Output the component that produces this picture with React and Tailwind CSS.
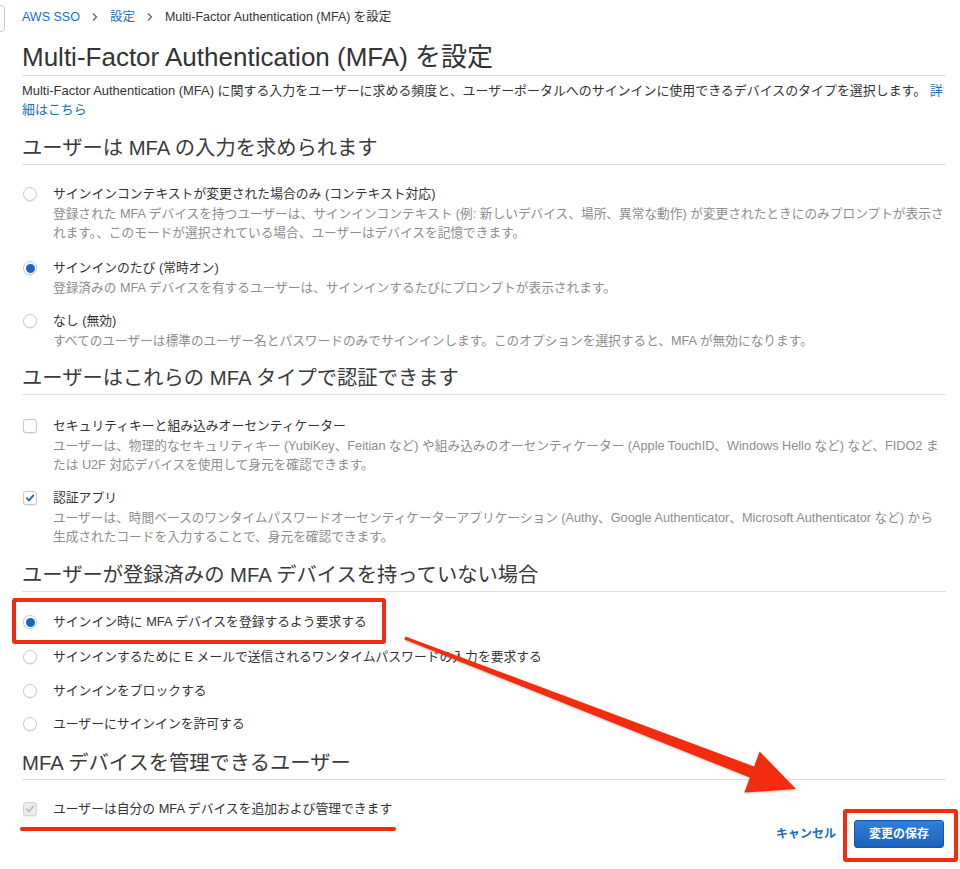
import React from "react";

function Radio({ checked }) {
  return (
    <span className="flex h-[14px] w-[14px] shrink-0 items-center justify-center rounded-full border border-[#c9c9c9] bg-white shadow-[0_1px_1px_rgba(0,0,0,0.08)]">
      {checked && <span className="h-[9px] w-[9px] rounded-full bg-[#1765c7]" />}
    </span>
  );
}

function Checkbox({ checked, disabled }) {
  return (
    <span
      className={`flex h-[14px] w-[14px] shrink-0 items-center justify-center rounded-[3px] border ${
        disabled ? "border-[#d6d6d6] bg-[#ececec]" : "border-[#c9c9c9] bg-white"
      } shadow-[0_1px_1px_rgba(0,0,0,0.08)]`}
    >
      {checked && (
        <svg width="10" height="10" viewBox="0 0 10 10">
          <path
            d="M1.8 5.2 L4 7.4 L8.4 2.4"
            fill="none"
            stroke={disabled ? "#bdbdbd" : "#1765c7"}
            strokeWidth="1.8"
            strokeLinecap="round"
            strokeLinejoin="round"
          />
        </svg>
      )}
    </span>
  );
}

function Option({ control, label, lines, top = "mt-[14px]" }) {
  return (
    <div className={top}>
      <div className="flex h-[20px] items-center">
        <span className="ml-[1px] w-[30px]">{control}</span>
        <span className="whitespace-nowrap text-[12.8px] leading-[20px] text-[#333]">{label}</span>
      </div>
      {lines && (
        <div className="ml-[31px] mt-[1px] text-[12.7px] leading-[19px] text-[#8d8d8d]">
          {lines.map((l) => (
            <div key={l} className="whitespace-nowrap">
              {l}
            </div>
          ))}
        </div>
      )}
    </div>
  );
}

function Heading({ children, className = "" }) {
  return (
    <h2 className={`border-b border-[#dedede] pb-[3px] text-[20.3px] leading-[26px] text-[#3a3a3a] ${className}`}>
      {children}
    </h2>
  );
}

function Chevron() {
  return (
    <svg width="8" height="10" viewBox="0 0 8 10" className="mx-[11px]">
      <path d="M2 1.5 L5.5 5 L2 8.5" fill="none" stroke="#666" strokeWidth="1.3" />
    </svg>
  );
}

export default function App() {
  return (
    <div className="relative h-[869px] w-[960px] overflow-hidden bg-white font-['Liberation_Sans','Noto_Sans_CJK_JP',sans-serif]">
      {/* sliver of the side panel toggle */}
      <div className="absolute left-[-10px] top-[5px] h-[27px] w-[15px] rounded-[4px] border border-[#c9c9c9] bg-white" />

      <div className="pl-[22px] pr-[14px]">
        {/* breadcrumb */}
        <div className="flex items-center pt-[8px] text-[12.5px] leading-[18px]">
          <span className="text-[#1a6fc4]">AWS SSO</span>
          <Chevron />
          <span className="text-[#1a6fc4]">設定</span>
          <Chevron />
          <span className="text-[#333]">Multi-Factor Authentication (MFA) を設定</span>
        </div>

        <h1 className="mt-[15px] border-b border-[#dedede] pb-[2px] text-[26px] leading-[32px] text-[#333]">
          Multi-Factor Authentication (MFA) を設定
        </h1>

        <p className="mt-[5px] text-[12.95px] leading-[19px] text-[#333]">
          <span className="whitespace-nowrap">
            Multi-Factor Authentication (MFA) に関する入力をユーザーに求める頻度と、ユーザーポータルへのサインインに使用できるデバイスのタイプを選択します。{" "}
            <span className="text-[#1a6fc4]">詳</span>
          </span>
          <br />
          <span className="text-[#1a6fc4]">細はこちら</span>
        </p>

        <Heading className="mt-[16px]">ユーザーは MFA の入力を求められます</Heading>
        <Option
          top="mt-[19px]"
          control={<Radio />}
          label="サインインコンテキストが変更された場合のみ (コンテキスト対応)"
          lines={[
            "登録された MFA デバイスを持つユーザーは、サインインコンテキスト (例: 新しいデバイス、場所、異常な動作) が変更されたときにのみプロンプトが表示さ",
            "れます。、このモードが選択されている場合、ユーザーはデバイスを記憶できます。",
          ]}
        />
        <Option
          top="mt-[15px]"
          control={<Radio checked />}
          label="サインインのたび (常時オン)"
          lines={["登録済みの MFA デバイスを有するユーザーは、サインインするたびにプロンプトが表示されます。"]}
        />
        <Option
          top="mt-[13px]"
          control={<Radio />}
          label="なし (無効)"
          lines={["すべてのユーザーは標準のユーザー名とパスワードのみでサインインします。このオプションを選択すると、MFA が無効になります。"]}
        />

        <Heading className="mt-[14px]">ユーザーはこれらの MFA タイプで認証できます</Heading>
        <Option
          top="mt-[21px]"
          control={<Checkbox />}
          label="セキュリティキーと組み込みオーセンティケーター"
          lines={[
            "ユーザーは、物理的なセキュリティキー (YubiKey、Feitian など) や組み込みのオーセンティケーター (Apple TouchID、Windows Hello など) など、FIDO2 ま",
            "たは U2F 対応デバイスを使用して身元を確認できます。",
          ]}
        />
        <Option
          top="mt-[13px]"
          control={<Checkbox checked />}
          label="認証アプリ"
          lines={[
            "ユーザーは、時間ベースのワンタイムパスワードオーセンティケーターアプリケーション (Authy、Google Authenticator、Microsoft Authenticator など) から",
            "生成されたコードを入力することで、身元を確認できます。",
          ]}
        />

        <Heading className="mt-[15px]">ユーザーが登録済みの MFA デバイスを持っていない場合</Heading>
        <Option top="mt-[20px]" control={<Radio checked />} label="サインイン時に MFA デバイスを登録するよう要求する" />
        <Option top="mt-[15px]" control={<Radio />} label="サインインするために E メールで送信されるワンタイムパスワードの入力を要求する" />
        <Option control={<Radio />} label="サインインをブロックする" />
        <Option top="mt-[13px]" control={<Radio />} label="ユーザーにサインインを許可する" />

        <Heading className="mt-[16px]">MFA デバイスを管理できるユーザー</Heading>
        <Option top="mt-[19px]" control={<Checkbox checked disabled />} label="ユーザーは自分の MFA デバイスを追加および管理できます" />

        <div className="mt-[1px] flex items-center justify-end gap-[18px] pr-[2px]">
          <span className="text-[12px] font-bold text-[#1a6fc4]">キャンセル</span>
          <button className="h-[28px] w-[90px] rounded-[3px] border border-[#1656a8] bg-gradient-to-b from-[#2f80dc] to-[#1a62bb] text-[12px] font-bold text-white">
            変更の保存
          </button>
        </div>
      </div>

      {/* annotations */}
      <div className="absolute left-[12px] top-[598px] h-[46px] w-[374px] rounded-[3px] border-[4px] border-[#f42c0e]" />
      <div className="absolute left-[843px] top-[809px] h-[53px] w-[115px] rounded-[3px] border-[4px] border-[#f42c0e]" />
      <div className="absolute left-[20px] top-[827px] h-[4px] w-[376px] rounded-full bg-[#f42c0e]" />
      <svg className="absolute left-0 top-0" width="960" height="869" style={{ pointerEvents: "none" }}>
        <polygon
          points="405.5,636.6 754.1,766.4 759.6,751.4 796,789 744.4,792.6 749.9,777.6 404.5,639.4"
          fill="#f42c0e"
          style={{ filter: "drop-shadow(0 1px 1px rgba(0,0,0,0.25))" }}
        />
      </svg>
    </div>
  );
}
